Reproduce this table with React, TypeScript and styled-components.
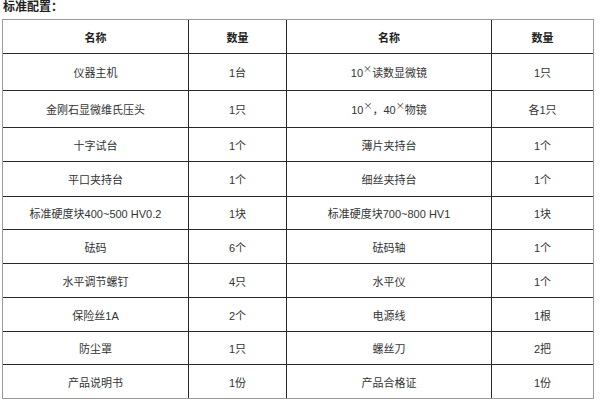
import React from "react";
import styled, { createGlobalStyle } from "styled-components";

const Global = createGlobalStyle`
  html, body { margin: 0; padding: 0; background: #fff; }
  body { font-family: "Liberation Sans", "Noto Sans CJK SC", sans-serif; color: #333; }
`;

const Page = styled.div`
  width: 600px;
  height: 402px;
  overflow: hidden;
  padding: 0 0 0 2px;
  box-sizing: border-box;
`;

const Title = styled.div`
  font-size: 12px;
  font-weight: bold;
  line-height: 15px;
  height: 15px;
  padding-left: 1px;
  margin-bottom: 4px;
  color: #222;
`;

const Table = styled.table`
  width: 592px;
  border: 1px solid #9a9a9a;
  border-collapse: separate;
  border-spacing: 0;
  table-layout: fixed;
  font-size: 11px;
`;

const Row = styled.tr<{ $h: number }>`
  height: ${(p) => p.$h}px;
`;

const Cell = styled.td<{ $head?: boolean }>`
  border-right: 1px solid #2a2a2a;
  border-bottom: 1px solid #2a2a2a;
  text-align: center;
  vertical-align: middle;
  padding: 0;
  font-weight: ${(p) => (p.$head ? "bold" : "normal")};
  color: ${(p) => (p.$head ? "#222" : "#333")};
  &:last-child { border-right: none; }
  tr:last-child > & { border-bottom: none; }
`;

const Sup = styled.sup`
  font-family: "Noto Sans CJK SC", sans-serif;
  font-size: 9px;
  vertical-align: super;
  line-height: 0;
`;

const X = () => <Sup>×</Sup>;

const rows: [React.ReactNode, string, React.ReactNode, string, number][] = [
  ["仪器主机", "1台", <>10<X />读数显微镜</>, "1只", 37],
  ["金刚石显微维氏压头", "1只", <>10<X />，40<X />物镜</>, "各1只", 37],
  ["十字试台", "1个", "薄片夹持台", "1个", 34],
  ["平口夹持台", "1个", "细丝夹持台", "1个", 35],
  ["标准硬度块400~500 HV0.2", "1块", "标准硬度块700~800 HV1", "1块", 33],
  ["砝码", "6个", "砝码轴", "1个", 34],
  ["水平调节螺钉", "4只", "水平仪", "1个", 34],
  ["保险丝1A", "2个", "电源线", "1根", 34],
  ["防尘罩", "1只", "螺丝刀", "2把", 33],
  ["产品说明书", "1份", "产品合格证", "1份", 33],
];

export default function App() {
  return (
    <>
      <Global />
      <Page>
        <Title>标准配置：</Title>
        <Table>
          <colgroup>
            <col style={{ width: 186 }} />
            <col style={{ width: 98 }} />
            <col style={{ width: 205 }} />
            <col style={{ width: 101 }} />
          </colgroup>
          <tbody>
            <Row $h={34}>
              <Cell $head>名称</Cell>
              <Cell $head>数量</Cell>
              <Cell $head>名称</Cell>
              <Cell $head>数量</Cell>
            </Row>
            {rows.map(([a, b, c, d, h], i) => (
              <Row key={i} $h={h}>
                <Cell>{a}</Cell>
                <Cell>{b}</Cell>
                <Cell>{c}</Cell>
                <Cell>{d}</Cell>
              </Row>
            ))}
          </tbody>
        </Table>
      </Page>
    </>
  );
}
